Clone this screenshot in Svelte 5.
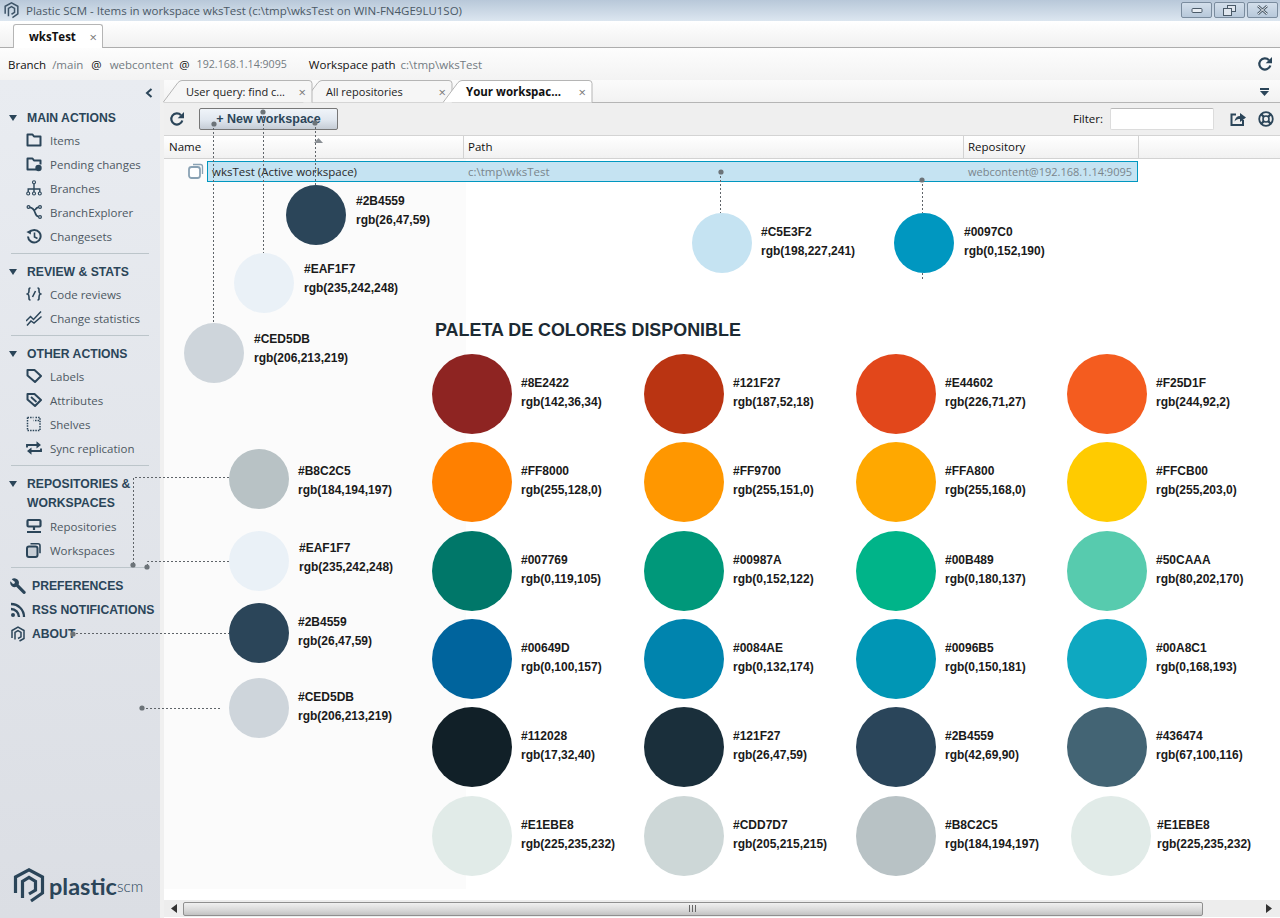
<script>
  const icons = {
    folder: '<path stroke-width="2" stroke-linejoin="round" d="M1.500 2.500h5l1.500 2h6.500v9h-13z"/>',
    pending: '<path stroke-width="2" stroke-linejoin="round" d="M10 13.500H1.500v-11h5l1.500 2h6.500v4"/><circle cx="12.500" cy="12" r="3.200" fill="currentColor" stroke="none"/>',
    branches: '<g stroke-width="1.100"><circle cx="8" cy="2.200" r="1.500"/><circle cx="2.200" cy="13.500" r="1.500"/><circle cx="8" cy="13.500" r="1.500"/><circle cx="13.800" cy="13.500" r="1.500"/><path stroke-width="1.400" d="M8 4v8M2.200 12V9h11.600v3"/></g>',
    explorer: '<g stroke-width="1.200"><circle cx="2.500" cy="3" r="1.400"/><circle cx="14" cy="3" r="1.400"/><circle cx="14" cy="13" r="1.400"/><path stroke-width="1.700" d="M4 3.400c3 .6 4 2 5 5s2 4 3.600 4.300M9 6c1-1.600 2-2.500 3.600-2.800"/></g>',
    clock: '<path stroke-width="2" d="M3.200 4.500A6.300 6.300 0 1 1 2 8.500"/><path d="M.4 4 4.800 6.500 5 1.800z" fill="currentColor" stroke="none"/><path stroke-width="1.600" d="M8.500 4.500V9l3 1.500"/>',
    code: '<path stroke-width="1.600" d="M4.500 2C2.800 2 3 3 3 5S3 7.500 1.500 8C3 8.500 3 9 3 11s-.2 3 1.500 3M11.500 2c1.700 0 1.500 1 1.500 3s0 2.500 1.500 3C13 8.500 13 9 13 11s.2 3-1.500 3M9.500 5 6.500 11"/>',
    stats: '<path stroke-width="1.500" d="M0 11 4.500 6.500 7.500 9.500 15 1.500M1 15.500 5 11 8 13 15.500 6.500"/>',
    label: '<path stroke-width="2" stroke-linejoin="round" d="M1.500 2h7l6.500 6-6 6-7.500-6.500z"/>',
    attr: '<path stroke-width="2" stroke-linejoin="round" d="M1.500 2h7l6.500 6-6 6-7.500-6.500z"/><path stroke-width="1.800" d="M5 5 10.500 10"/>',
    shelves: '<path stroke-dasharray="1.500 1.100" stroke-width="1.500" d="M1.500 1.500h6M1.500 1.500v13h12.500v-10h-6.500"/><path stroke-dasharray="1.500 1.100" stroke-width="1.500" d="M9.500 1.500h4.500v3"/>',
    sync: '<path stroke-width="1.900" d="M1 7.500V5h10M15 8.500V11H5"/><path d="M10.500 1.200l4.500 3.800-4.500 3.500zM5.500 14.800 1 11l4.500-3.500z" fill="currentColor" stroke="none"/>',
    repo: '<rect x="1.500" y="2" width="13" height="6.500" rx="1" stroke-width="2.200"/><path stroke-width="2.200" d="M8 9v3M1 14h14"/>',
    work: '<rect x="1" y="4.500" width="10.500" height="10.500" rx="2" fill="#c8cfd6" stroke-width="2"/><path stroke-width="1.600" d="M4.500 1.800h7.500a2 2 0 0 1 2 2v7.500"/>',
    wrench: '<path fill="currentColor" stroke="none" d="M5.500.5a4.500 4.500 0 0 0-3.800.8L5 4 4.500 5.500 3 6 .4 3.300A4.500 4.500 0 0 0 6.300 8.800l6.700 6.700a1.500 1.500 0 0 0 2.200-2.200L8.600 6.600A4.500 4.500 0 0 0 5.500.5z"/>',
    rss: '<circle cx="3" cy="13" r="2" fill="currentColor" stroke="none"/><path stroke-width="2.300" d="M1 7a8 8 0 0 1 8 8M1 2a13 13 0 0 1 13 13"/>',
    about: '<path stroke-width="1.500" d="M2 12V4.500L8 1l6 3.500v8L9.500 15"/><path stroke-width="1.500" d="M5 13.500V6.300L8 4.500l3 1.800v4.500L8 12.500"/>'
  };

  const sections = [
    { title: ['MAIN ACTIONS'], items: [['folder','Items'],['pending','Pending changes'],['branches','Branches'],['explorer','BranchExplorer'],['clock','Changesets']] },
    { title: ['REVIEW & STATS'], items: [['code','Code reviews'],['stats','Change statistics']] },
    { title: ['OTHER ACTIONS'], items: [['label','Labels'],['attr','Attributes'],['shelves','Shelves'],['sync','Sync replication']] },
    { title: ['REPOSITORIES &','WORKSPACES'], items: [['repo','Repositories'],['work','Workspaces']] }
  ];
  const links = [['wrench','PREFERENCES'],['rss','RSS NOTIFICATIONS'],['about','ABOUT']];

  const tabs = [
    { label: 'User query: find c...', z: 2 },
    { label: 'All repositories', z: 1 },
    { label: 'Your workspac...', z: 3, on: true }
  ];

  const palette = [
    ['#8E2422','#8E2422','rgb(142,36,34)'],['#BA3412','#121F27','rgb(187,52,18)'],['#E2471B','#E44602','rgb(226,71,27)'],['#F45C1F','#F25D1F','rgb(244,92,2)'],
    ['#FF8000','#FF8000','rgb(255,128,0)'],['#FF9700','#FF9700','rgb(255,151,0)'],['#FFA800','#FFA800','rgb(255,168,0)'],['#FFCB00','#FFCB00','rgb(255,203,0)'],
    ['#007769','#007769','rgb(0,119,105)'],['#00987A','#00987A','rgb(0,152,122)'],['#00B489','#00B489','rgb(0,180,137)'],['#57CBAE','#50CAAA','rgb(80,202,170)'],
    ['#00649D','#00649D','rgb(0,100,157)'],['#0084AE','#0084AE','rgb(0,132,174)'],['#0096B5','#0096B5','rgb(0,150,181)'],['#0EA8C1','#00A8C1','rgb(0,168,193)'],
    ['#112028','#112028','rgb(17,32,40)'],['#1A2F3B','#121F27','rgb(26,47,59)'],['#2A455A','#2B4559','rgb(42,69,90)'],['#436474','#436474','rgb(67,100,116)'],
    ['#E1EBE8','#E1EBE8','rgb(225,235,232)'],['#CDD7D7','#CDD7D7','rgb(205,215,215)'],['#B8C2C5','#B8C2C5','rgb(184,194,197)'],['#E1EBE8','#E1EBE8','rgb(225,235,232)']
  ];

  // x, y of the circle; gap and top offset of its label
  const notes = [
    [286,185,10,7,'#2B4559','#2B4559','rgb(26,47,59)'],
    [234,253,10,7,'#EAF1F7','#EAF1F7','rgb(235,242,248)'],
    [184,323,10,7,'#CED5DB','#CED5DB','rgb(206,213,219)'],
    [692,213,9,10,'#C5E3F2','#C5E3F2','rgb(198,227,241)'],
    [894,213,10,10,'#0097C0','#0097C0','rgb(0,152,190)'],
    [229,449,9,13,'#B8C2C5','#B8C2C5','rgb(184,194,197)'],
    [229,531,10,8,'#EAF1F7','#EAF1F7','rgb(235,242,248)'],
    [229,603,9,10,'#2B4559','#2B4559','rgb(26,47,59)'],
    [229,678,9,10,'#CED5DB','#CED5DB','rgb(206,213,219)']
  ];

  const leaders = [
    'M213.500 124V323','M263.500 112V253','M315.500 123V185','M720.500 172V213',
    'M922.500 180V213M922.500 273V279',
    'M229 477.500H133.500V565','M229 561.500H147.500V567','M72 633.500H229','M142 708.500H220'
  ];
  const dots = [[214,124],[263,112],[315,123],[721,172],[922,180],[133,565],[147,567],[73,634],[142,708]];
</script>

<svg width="0" height="0" class="defs" aria-hidden="true">
  <symbol id="hex" viewBox="0 0 32 36">
    <path d="M2.500 25V9L16 1.800 29.500 9v16L18 33" fill="none" stroke="currentColor" stroke-width="3.200"/>
    <path d="M9.500 30V13.500L16 9.500l6.500 4v8.500L16 26" fill="none" stroke="currentColor" stroke-width="3.200"/>
  </symbol>
  <symbol id="refresh" viewBox="0 0 16 16">
    <path d="M13.300 9.500A5.600 5.600 0 1 1 12 4.200" fill="none" stroke="currentColor" stroke-width="2.200"/>
    <path d="M15 1v6.300H8.700z" fill="currentColor"/>
  </symbol>
</svg>

<div class="win">
  <header class="title">
    <svg class="tlogo"><use href="#hex" /></svg>
    <span class="ttext">Plastic SCM - Items in workspace wksTest (c:\tmp\wksTest on WIN-FN4GE9LU1SO)</span>
    <div class="ctrls">
      <span class="ctrl"><svg width="12" height="8" viewBox="0 0 12 8"><rect x="1" y="2.500" width="10" height="4" rx="1" fill="#e8edf3" stroke="#4a5a68"/></svg></span>
      <span class="ctrl"><svg width="13" height="11" viewBox="0 0 13 11"><rect x="4.500" y=".5" width="8" height="6" fill="#dfe6ee" stroke="#4a5a68"/><rect x=".5" y="3.500" width="8" height="7" fill="#dfe6ee" stroke="#4a5a68"/></svg></span>
      <span class="ctrl"><svg width="13" height="10" viewBox="0 0 13 10"><path d="M2 1l9 8M11 1 2 9" stroke="#4a5a68" stroke-width="2.600"/><path d="M2 1l9 8M11 1 2 9" stroke="#eef2f6" stroke-width="1"/></svg></span>
    </div>
  </header>

  <div class="wsbar">
    <div class="wstab"><b>wksTest</b><span class="x">×</span></div>
  </div>

  <div class="info">
    <span class="k">Branch</span><span class="v a1">/main</span><span class="k a2">@</span><span class="v a3">webcontent</span><span class="k a4">@</span><span class="v a5">192.168.1.14:9095</span>
    <span class="k a6">Workspace path</span><span class="v a7">c:\tmp\wksTest</span>
    <svg class="irefresh"><use href="#refresh" /></svg>
  </div>

  <div class="body">
    <aside class="side">
      <div class="collapse"><svg width="8" height="10" viewBox="0 0 8 10"><path d="M6.500 1 2 5l4.500 4" fill="none" stroke="#2b4559" stroke-width="2"/></svg></div>
      {#each sections as s, i}
        <section class="sec" class:first={i === 0}>
          <div class="head" class:tall={s.title.length > 1}>
            <span class="tri"></span>
            <span class="htext">{#each s.title as t}<span class="hline">{t}</span>{/each}</span>
          </div>
          {#each s.items as [ic, label]}
            <div class="item">
              <svg class="ico" viewBox="0 0 16 16">{@html icons[ic]}</svg>
              <span>{label}</span>
            </div>
          {/each}
        </section>
      {/each}
      <div class="links">
        {#each links as [ic, label]}
          <div class="link">
            <svg class="ico lico" viewBox="0 0 16 16">{@html icons[ic]}</svg>
            <span>{label}</span>
          </div>
        {/each}
      </div>
      <div class="logo">
        <svg class="lmark"><use href="#hex" /></svg>
        <span class="lword"><span class="lp">plastic</span><span class="ls">scm</span></span>
      </div>
    </aside>

    <main class="content">
      <div class="tabs">
        {#each tabs as t}
          <div class="tab" class:on={t.on} style:z-index={t.z}>
            <svg class="tabshape" width="151" height="23" viewBox="0 0 151 23">
              <path d="M0 22.500 15 2.500Q17 .5 19 .5H146Q149 .5 149 3.500V22.500" fill={t.on ? '#fff' : '#f6f6f6'} stroke="#b5b5b5"/>
            </svg>
            <span class="tl">{t.label}</span><span class="x tx">×</span>
          </div>
        {/each}
        <svg class="tabmenu" width="9" height="8" viewBox="0 0 9 8"><path d="M0 0h9v2H0z" fill="#2b4559"/><path d="M0 3h9L4.500 8z" fill="#2b4559"/></svg>
      </div>

      <div class="tools">
        <svg class="trefresh"><use href="#refresh" /></svg>
        <button class="newbtn">+ New workspace</button>
        <span class="spacer"></span>
        <span class="flabel">Filter:</span>
        <span class="finput"></span>
        <svg class="tshare" viewBox="0 0 16 16"><path d="M6 3.500H1.500v10.500h11.500V9" fill="none" stroke="currentColor" stroke-width="2"/><path d="M4.500 10.500C5 7 7 5 10 5V2l6 4.500-6 4.500V8C8 8 6 8.500 4.500 10.500z" fill="currentColor"/></svg>
        <svg class="thelp" viewBox="0 0 16 16"><circle cx="8" cy="8" r="6.800" fill="none" stroke="currentColor" stroke-width="1.800"/><circle cx="8" cy="8" r="3" fill="none" stroke="currentColor" stroke-width="1.600"/><path d="M3 3l3 3M13 3l-3 3M3 13l3-3M13 13l-3-3" stroke="currentColor" stroke-width="2.400"/></svg>
      </div>

      <div class="thead">
        <div class="th c1">Name</div>
        <div class="th c2">Path</div>
        <div class="th c3">Repository</div>
      </div>

      <div class="canvas">
        <div class="pale"></div>
        <div class="rowwrap">
          <svg class="rowico" viewBox="0 0 16 16"><rect x="1" y="4" width="11" height="11" rx="2.500" fill="#fff" stroke="#8aa2b4" stroke-width="1.800"/><path d="M5 1.500h7.500a2 2 0 0 1 2 2V11" fill="none" stroke="#8aa2b4" stroke-width="1.300"/></svg>
          <div class="row">
            <span class="r1">wksTest (Active workspace)</span>
            <span class="r2">c:\tmp\wksTest</span>
            <span class="r3">webcontent@192.168.1.14:9095</span>
          </div>
        </div>

        <div class="palette">
          <h2>PALETA DE COLORES DISPONIBLE</h2>
          <div class="grid">
            {#each palette as [fill, hex, rgb], i}
              <div class="cell" class:shift={i === 23}>
                <span class="dot" style:background={fill}></span>
                <div class="lab"><div>{hex}</div><div>{rgb}</div></div>
              </div>
            {/each}
          </div>
        </div>
      </div>

      <div class="scroll">
        <svg class="arr" width="6" height="9" viewBox="0 0 6 9"><path d="M6 0v9L0 4.500z" fill="#333"/></svg>
        <div class="thumb"><svg width="8" height="7" viewBox="0 0 8 7"><path d="M.5 0v7M3.500 0v7M6.500 0v7" stroke="#666"/></svg></div>
        <span class="spacer"></span>
        <svg class="arr" width="6" height="9" viewBox="0 0 6 9"><path d="M0 0v9l6-4.500z" fill="#333"/></svg>
      </div>
    </main>
  </div>

  <div class="overlay">
    <svg class="wires" width="1280" height="918">
      <path d="M314 143l4.500-5 4.500 5z" fill="#8a8f94"/>
      {#each leaders as d}<path {d} fill="none" stroke="#5f6469" stroke-dasharray="2 2"/>{/each}
      {#each dots as [cx, cy]}<circle {cx} {cy} r="2.600" fill="#6c7378"/>{/each}
    </svg>
    {#each notes as [x, y, gap, top, fill, hex, rgb]}
      <div class="note" style:left="{x}px" style:top="{y}px" style:gap="{gap}px">
        <span class="dot small" style:background={fill}></span>
        <div class="lab" style:padding-top="{top}px"><div>{hex}</div><div>{rgb}</div></div>
      </div>
    {/each}
  </div>
</div>

<style>
  :global(body) { margin: 0; background: #fff; }
  .defs { position: absolute; }
  .win { position: relative; width: 1280px; height: 918px; overflow: hidden; display: flex; flex-direction: column; font: 11.500px "Open Sans", sans-serif; color: #1a1a1a; }

  .title { height: 21px; flex: none; display: flex; align-items: center; background: linear-gradient(#b8c8d9, #dce6f0); color: #4b5966; }
  .tlogo { width: 15px; height: 17px; margin: 0 7px 0 4px; color: #3d5468; }
  .ctrls { margin-left: auto; display: flex; gap: 2px; margin-right: 2px; align-self: flex-start; margin-top: 2px; }
  .ctrl { width: 29px; height: 14px; border: 1px solid #7a8c9e; border-radius: 2px; background: linear-gradient(#d3dfeb, #b7c8da); display: flex; align-items: center; justify-content: center; }

  .wsbar { height: 27px; flex: none; box-sizing: border-box; display: flex; align-items: flex-end; padding-left: 13px; background: linear-gradient(#fff, #f1f1f1); border-bottom: 1px solid #adadad; }
  .wstab { width: 90px; height: 24px; box-sizing: border-box; margin-bottom: -1px; border: 1px solid #b5b5b5; border-bottom: 0; border-radius: 3px 3px 0 0; background: #fff; display: flex; align-items: center; padding-left: 15px; color: #111; }
  .x { color: #777; font-size: 13px; }
  .wstab .x { margin-left: auto; margin-right: 5px; }

  .info { height: 32px; flex: none; display: flex; align-items: center; padding-left: 8px; background: linear-gradient(#fdfdfd, #f3f3f3); }
  .k { color: #111; }
  .v { color: #737b82; }
  .a1 { margin-left: 6px; } .a2 { margin-left: 8px; } .a3 { margin-left: 8px; } .a4 { margin-left: 6px; } .a5 { margin-left: 7px; font-size: 10.650px; } .a6 { margin-left: 22px; } .a7 { margin-left: 5px; }
  .irefresh { width: 16px; height: 16px; margin-left: auto; margin-right: 7px; color: #2b4559; }

  .body { flex: 1; min-height: 0; display: flex; }
  .side { flex: none; position: relative; padding: 0 11px; background: linear-gradient(#e9ecf1, #dbdee4); border-right: 4px solid #f0f0f0; width: 138px; color: #4d5862; }
  .collapse { height: 26px; display: flex; align-items: center; justify-content: flex-end; padding-right: 2px; margin-right: -6px; }
  .sec { border-bottom: 1px solid #bcc5ca; padding: 6px 0 4px; }
  .sec.first { padding-top: 0; }
  .head { display: flex; padding: 3px 0 1px; margin-left: -2px; font: bold 12.200px/19px "Liberation Sans", sans-serif; color: #2b4559; }
  .head.tall { padding-bottom: 2px; }
  .tri { width: 0; height: 0; margin: 6px 10px 0 0; border: 4px solid transparent; border-top: 6px solid #2b4559; border-bottom: 0; }
  .hline { display: block; white-space: nowrap; }
  .item { height: 24px; box-sizing: border-box; padding: 0 0 2px 15px; display: flex; align-items: center; gap: 8px; }
  .ico { width: 16px; height: 16px; flex: none; fill: none; stroke: #2b4559; color: #2b4559; stroke-width: 1.800; }
  .links { padding-top: 6px; margin-left: -1px; }
  .link { height: 24px; display: flex; align-items: center; gap: 6px; font: bold 12.200px "Liberation Sans", sans-serif; color: #2b4559; white-space: nowrap; }
  .logo { position: absolute; left: 13px; bottom: 14px; display: flex; align-items: center; color: #2b4559; }
  .lmark { width: 32px; height: 36px; margin-right: 4px; }
  .lword { white-space: nowrap; }
  .lp { font: bold 23.500px "Lato", sans-serif; }
  .ls { font: 300 15.500px "Lato", sans-serif; vertical-align: 3px; }

  .content { flex: 1; min-width: 0; display: flex; flex-direction: column; }
  .tabs { height: 23px; flex: none; box-sizing: border-box; display: flex; position: relative; background: linear-gradient(#fbfbfb, #f2f2f2); border-bottom: 1px solid #b5b5b5; }
  .tab { position: relative; width: 140px; height: 22px; display: flex; align-items: center; padding: 1px 0 0 23px; box-sizing: border-box; color: #222; font-size: 11px; }
  .tab:first-child { margin-left: -1px; }
  .tabshape { position: absolute; left: 0; top: 0; }
  .tab.on .tl { font-weight: 700; font-size: 11.500px; color: #111; }
  .tl { position: relative; white-space: nowrap; }
  .tx { position: absolute; right: -3px; top: 3px; }
  .tabmenu { position: absolute; right: 11px; top: 8px; }

  .tools { height: 33px; flex: none; box-sizing: border-box; display: flex; align-items: center; background: #efefef; border-bottom: 1px solid #d4d4d4; padding: 0 6px 1px 5px; }
  .trefresh { width: 16px; height: 16px; color: #2b4559; }
  .newbtn { width: 139px; height: 22px; margin-left: 14px; padding: 0; border: 1px solid #777; border-radius: 2px; background: linear-gradient(#f0f4f9, #e0e7ef 55%, #c5ccd5); font: bold 12.500px "Liberation Sans", sans-serif; color: #2b4559; }
  .spacer { flex: 1; }
  .flabel { color: #111; margin-right: 7px; }
  .finput { width: 102px; height: 20px; background: #fff; border: 1px solid #dcdcdc; border-top-color: #b9b9b9; border-radius: 2px; }
  .tshare { width: 16px; height: 16px; margin-left: 16px; color: #2b4559; }
  .thelp { width: 16px; height: 16px; margin-left: 12px; color: #2b4559; }

  .thead { height: 23px; flex: none; box-sizing: border-box; display: flex; background: linear-gradient(#fff, #f1f1f1); border-bottom: 1px solid #d2d2d2; }
  .th { box-sizing: border-box; padding-left: 5px; line-height: 21px; border-right: 1px solid #d2d2d2; color: #111; }
  .c1 { width: 300px; } .c2 { width: 500px; padding-left: 4px; } .c3 { width: 175px; padding-left: 4px; }

  .canvas { flex: 1; min-height: 0; position: relative; background: #fff; }
  .pale { position: absolute; left: 0; top: 0; width: 302px; height: 730px; background: #fbfbfb; }
  .rowwrap { position: relative; height: 24px; display: flex; align-items: center; padding-left: 24px; }
  .rowico { width: 16px; height: 16px; margin-right: 3px; }
  .row { width: 931px; height: 21px; box-sizing: border-box; display: flex; align-items: center; background: #c5e3f2; border: 1px solid #0097c0; color: #7a858c; }
  .r1 { flex: none; width: 260px; padding-left: 4px; box-sizing: border-box; color: #2a2a2a; }
  .r2 { flex: none; width: 500px; }
  .r3 { flex: none; font-size: 11px; }
  .palette { position: relative; padding: 135px 0 0 268px; }
  h2 { margin: 0 0 12px 3px; font: bold 17.900px/24px "Liberation Sans", sans-serif; color: #1c2a33; }
  .grid { display: grid; grid-template-columns: 212px 212px 211px 211px; grid-template-rows: 88px 89px 88px 88px 89px 80px; }
  .cell { display: flex; align-items: flex-start; gap: 9px; }
  .cell.shift { margin-left: 4px; gap: 6px; margin-right: -20px; }
  .dot { display: block; width: 80px; height: 80px; flex: none; border-radius: 50%; }
  .dot.small { width: 60px; height: 60px; }
  .lab { font: bold 12px/19px "Liberation Sans", sans-serif; color: #1a1a1a; white-space: nowrap; }
  .cell .lab { padding-top: 20px; }

  .scroll { height: 17px; flex: none; display: flex; align-items: center; background: #ededed; padding: 0 8px 0 7px; margin-bottom: 1px; }
  .thumb { width: 1018px; height: 12px; margin-left: 6px; border: 1px solid #8f8f8f; border-radius: 2px; background: linear-gradient(#f1f1f1, #d8d8d8 60%, #c2c2c2); display: flex; align-items: center; justify-content: center; }

  .overlay { position: absolute; inset: 0; pointer-events: none; }
  .wires { position: absolute; left: 0; top: 0; }
  .note { position: absolute; display: flex; align-items: flex-start; }
</style>
